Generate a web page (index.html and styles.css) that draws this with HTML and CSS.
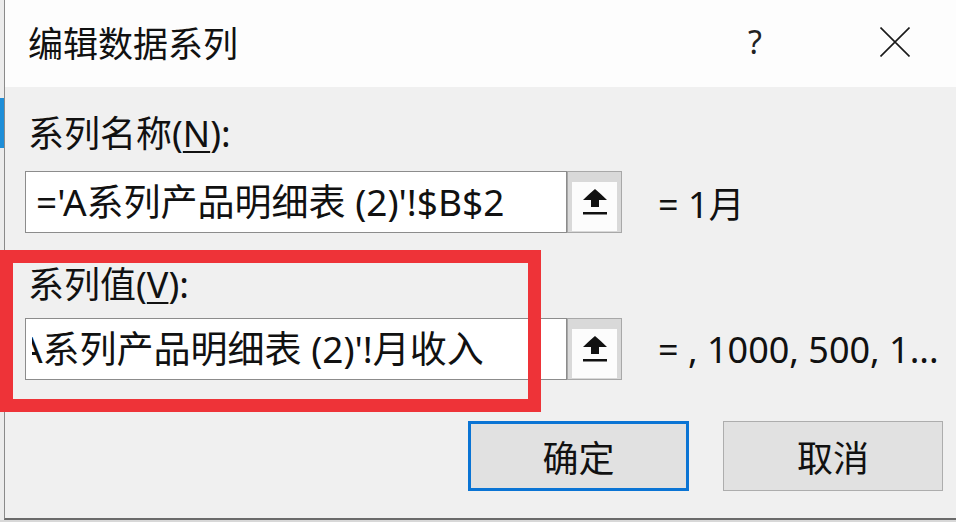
FILE: index.html
```html
<!DOCTYPE html>
<html lang="zh-CN">
<head>
    <meta charset="UTF-8">
    <meta name="viewport" content="width=device-width, initial-scale=1.0">
    <title>编辑数据系列</title>
    <link rel="stylesheet" href="styles.css">
</head>
<body>
    <div class="screen">
        <div class="sheet-edge">
            <div class="sheet-selection"></div>
        </div>
        <div class="dialog">
            <div class="titlebar">
                <div class="title">编辑数据系列</div>
                <div class="help">?</div>
                <div class="close">
                    <svg width="30" height="30" viewBox="0 0 30 30">
                        <path d="M0.5 0.5 L29.5 29.5 M29.5 0.5 L0.5 29.5" stroke="#1a1a1a" stroke-width="1.6" fill="none"/>
                    </svg>
                </div>
            </div>
            <div class="dialog-body">
                <div class="field">
                    <div class="field-label">系列名称(<u>N</u>):</div>
                    <div class="field-row">
                        <div class="ref-input">
                            <div class="ref-text">='A系列产品明细表 (2)'!$B$2</div>
                        </div>
                        <button class="ref-btn" type="button">
                            <span class="ref-btn-face">
                                <svg width="24" height="26" viewBox="0 0 24 26">
                                    <path d="M12 0 Q6 5 0 11 L8 11 L8 18 L16 18 L16 11 L24 11 Q18 5 12 0 Z" fill="#111"/>
                                    <rect x="0" y="23" width="24" height="2.5" fill="#111"/>
                                </svg>
                            </span>
                        </button>
                        <span class="field-value">= 1月</span>
                    </div>
                </div>
                <div class="field field-values">
                    <div class="field-label">系列值(<u>V</u>):</div>
                    <div class="field-row">
                        <div class="ref-input">
                            <div class="ref-text scrolled">='A系列产品明细表 (2)'!月收入</div>
                        </div>
                        <button class="ref-btn" type="button">
                            <span class="ref-btn-face">
                                <svg width="24" height="26" viewBox="0 0 24 26">
                                    <path d="M12 0 Q6 5 0 11 L8 11 L8 18 L16 18 L16 11 L24 11 Q18 5 12 0 Z" fill="#111"/>
                                    <rect x="0" y="23" width="24" height="2.5" fill="#111"/>
                                </svg>
                            </span>
                        </button>
                        <span class="field-value">= , 1000, 500, 1...</span>
                    </div>
                </div>
                <div class="actions">
                    <button class="btn btn-primary" type="button">确定</button>
                    <button class="btn" type="button">取消</button>
                </div>
            </div>
        </div>
        <!-- red annotation box drawn over the dialog -->
        <div class="highlight"></div>
    </div>
</body>
</html>
```

FILE: styles.css
```css
* {
    margin: 0;
    padding: 0;
    box-sizing: border-box;
    font-family: "Noto Sans", "Noto Sans CJK SC", sans-serif;
}

body {
    width: 956px;
    height: 522px;
    overflow: hidden;
    background: #d8d8d8;
}

.screen {
    position: relative;
    display: flex;
    width: 956px;
    height: 522px;
}

.sheet-edge {
    width: 4px;
    height: 520px;
    background: #ececec;
    padding-top: 98px;
}

.sheet-selection {
    height: 50px;
    background: #1e8ed8;
}

.dialog {
    flex: 1;
    height: 520px;
    display: flex;
    flex-direction: column;
    background: #f0f0f0;
    border-left: 1px solid #8a8a8a;
    border-bottom: 2px solid #6a6a6a;
}

.titlebar {
    height: 87px;
    display: flex;
    align-items: center;
    background: #fdfdfd;
    padding-left: 23px;
    padding-right: 46px;
}

.title {
    font-size: 35px;
    color: #111;
    padding-bottom: 4px;
}

.help {
    margin-left: auto;
    width: 40px;
    text-align: center;
    font-size: 32px;
    color: #222;
    padding-bottom: 4px;
}

.close {
    margin-left: 105px;
    width: 30px;
    height: 30px;
    margin-bottom: 4px;
}

.close svg {
    display: block;
}

.dialog-body {
    flex: 1;
    padding: 27px 13px 0 20px;
}

.field-label {
    font-size: 36px;
    line-height: 40px;
    color: #111;
    padding-left: 3px;
    margin-bottom: 17px;
}

.field-label u {
    text-underline-offset: 4px;
    text-decoration-thickness: 2px;
}

.field-values {
    margin-top: 32px;
}

.field-values .field-label {
    margin-bottom: 13px;
}

.field-row {
    display: flex;
    align-items: center;
    height: 62px;
}

.ref-input {
    flex-shrink: 0;
    width: 542px;
    height: 62px;
    background: #fff;
    border: 1px solid #8c8c8c;
    padding-left: 6px;
    display: flex;
    align-items: center;
}

.ref-text {
    white-space: nowrap;
    font-size: 37px;
    line-height: 48px;
    color: #111;
    padding-left: 4px;
}

/* the edit box is scrolled, so the start of the formula is hidden */
.ref-text.scrolled {
    width: 100%;
    overflow: hidden;
    padding-left: 0;
    text-indent: -40px;
}

.ref-btn {
    flex-shrink: 0;
    width: 55px;
    height: 62px;
    border: 1px solid #a8a8a8;
    background: #d9d9d9;
    padding: 10px 4px 1px 4px;
    display: flex;
}

.ref-btn-face {
    flex: 1;
    background: #fcfcfc;
    display: flex;
    align-items: center;
    justify-content: center;
    padding-bottom: 10px;
}

.ref-btn-face svg {
    display: block;
}

.field-value {
    margin-left: 36px;
    font-size: 36px;
    white-space: nowrap;
    color: #111;
}

.actions {
    display: flex;
    justify-content: flex-end;
    gap: 34px;
    margin-top: 41px;
}

.btn {
    width: 220px;
    height: 70px;
    background: #e1e1e1;
    border: 1px solid #adadad;
    font-size: 36px;
    color: #111;
}

.btn-primary {
    width: 221px;
    border: 3px solid #0a74d4;
}

.highlight {
    position: absolute;
    left: 0;
    top: 250px;
    width: 541px;
    height: 162px;
    border: 13px solid #ee3338;
}
```
